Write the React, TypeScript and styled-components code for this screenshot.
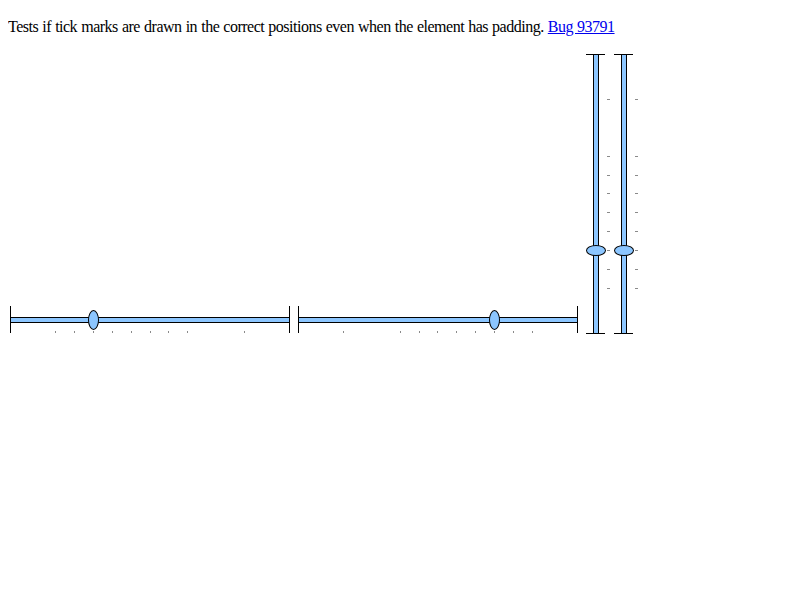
import React from 'react';
import styled, {createGlobalStyle} from 'styled-components';

const GlobalStyle = createGlobalStyle`
  body {
    margin: 8px;
    background: #ffffff;
    color: #000000;
    font-family: "Liberation Serif", "Times New Roman", serif;
    font-size: 16px;
  }
`

const FILL = '#8cc6ff'
const TICK = '#8a8a8a'

// offsets in px from the start of the track (left, or bottom for vertical)
const tickOffsets = [45, 64, 83, 102, 121, 140, 158, 177, 234]
const thumbOffset = 83

const H_WIDTH = 280
const V_HEIGHT = 280

type HProps = { reversed?: boolean }

const HSlider = ({reversed}: HProps) => {
    const pos = (o: number) => (reversed ? H_WIDTH - 1 - o : o)
    return (
        <HBox>
            <HCap/>
            <HTrack/>
            <HCap/>
            {tickOffsets.map((o) => (
                <HTick key={o} style={{left: pos(o)}}/>
            ))}
            <HThumb style={{left: pos(thumbOffset) - 5}}/>
        </HBox>
    )
}

const VSlider = () => {
    const pos = (o: number) => V_HEIGHT - 1 - o
    return (
        <VBox>
            <VCap/>
            <VTrack/>
            <VCap/>
            {tickOffsets.map((o) => (
                <VTick key={o} style={{top: pos(o)}}/>
            ))}
            <VThumb style={{top: pos(thumbOffset) - 5}}/>
        </VBox>
    )
}

export default function App() {
    return (
        <>
            <GlobalStyle/>
            <Intro>
                Tests if tick marks are drawn in the correct positions even when the element has padding.{' '}
                <a href="#">Bug 93791</a>
            </Intro>
            <Row>
                <HSlider/>
                <HSlider reversed/>
                <VSlider/>
                <VSlider/>
            </Row>
        </>
    )
}

const Intro = styled.p`
  margin: 10px 0 18px;
  line-height: 18px;
  letter-spacing: -0.5px;
  word-spacing: 0.6px;

  a {
    color: #0000ee;
    text-decoration: underline;
  }
`

const Row = styled.div`
  display: flex;
  align-items: flex-end;
  gap: 8px;
  padding-left: 2px;
`

//horizontal
const HBox = styled.div`
  position: relative;
  display: flex;
  align-items: flex-start;
  width: ${H_WIDTH}px;
  height: 27px;
  margin-bottom: 1px;
  flex-shrink: 0;
`

const HTrack = styled.div`
  flex: 1;
  margin-top: 11px;
  height: 6px;
  box-sizing: border-box;
  border-top: 1px solid #000;
  border-bottom: 1px solid #000;
  background: ${FILL};
`

const HCap = styled.div`
  width: 1px;
  height: 27px;
  background: #000;
`

const HTick = styled.div`
  position: absolute;
  top: 25px;
  width: 1px;
  height: 2px;
  background: ${TICK};
`

const HThumb = styled.div`
  position: absolute;
  top: 4px;
  width: 11px;
  height: 20px;
  box-sizing: border-box;
  border: 1px solid #000;
  border-radius: 50%;
  background: ${FILL};
`

//vertical
const VBox = styled.div`
  position: relative;
  display: flex;
  flex-direction: column;
  align-items: flex-start;
  width: 20px;
  height: ${V_HEIGHT}px;
  flex-shrink: 0;
`

const VTrack = styled.div`
  flex: 1;
  margin-left: 7px;
  width: 6px;
  box-sizing: border-box;
  border-left: 1px solid #000;
  border-right: 1px solid #000;
  background: ${FILL};
`

const VCap = styled.div`
  width: 19px;
  height: 1px;
  background: #000;
`

const VTick = styled.div`
  position: absolute;
  left: 21px;
  width: 3px;
  height: 1px;
  background: ${TICK};
`

const VThumb = styled.div`
  position: absolute;
  left: 0;
  width: 20px;
  height: 11px;
  box-sizing: border-box;
  border: 1px solid #000;
  border-radius: 50%;
  background: ${FILL};
`
